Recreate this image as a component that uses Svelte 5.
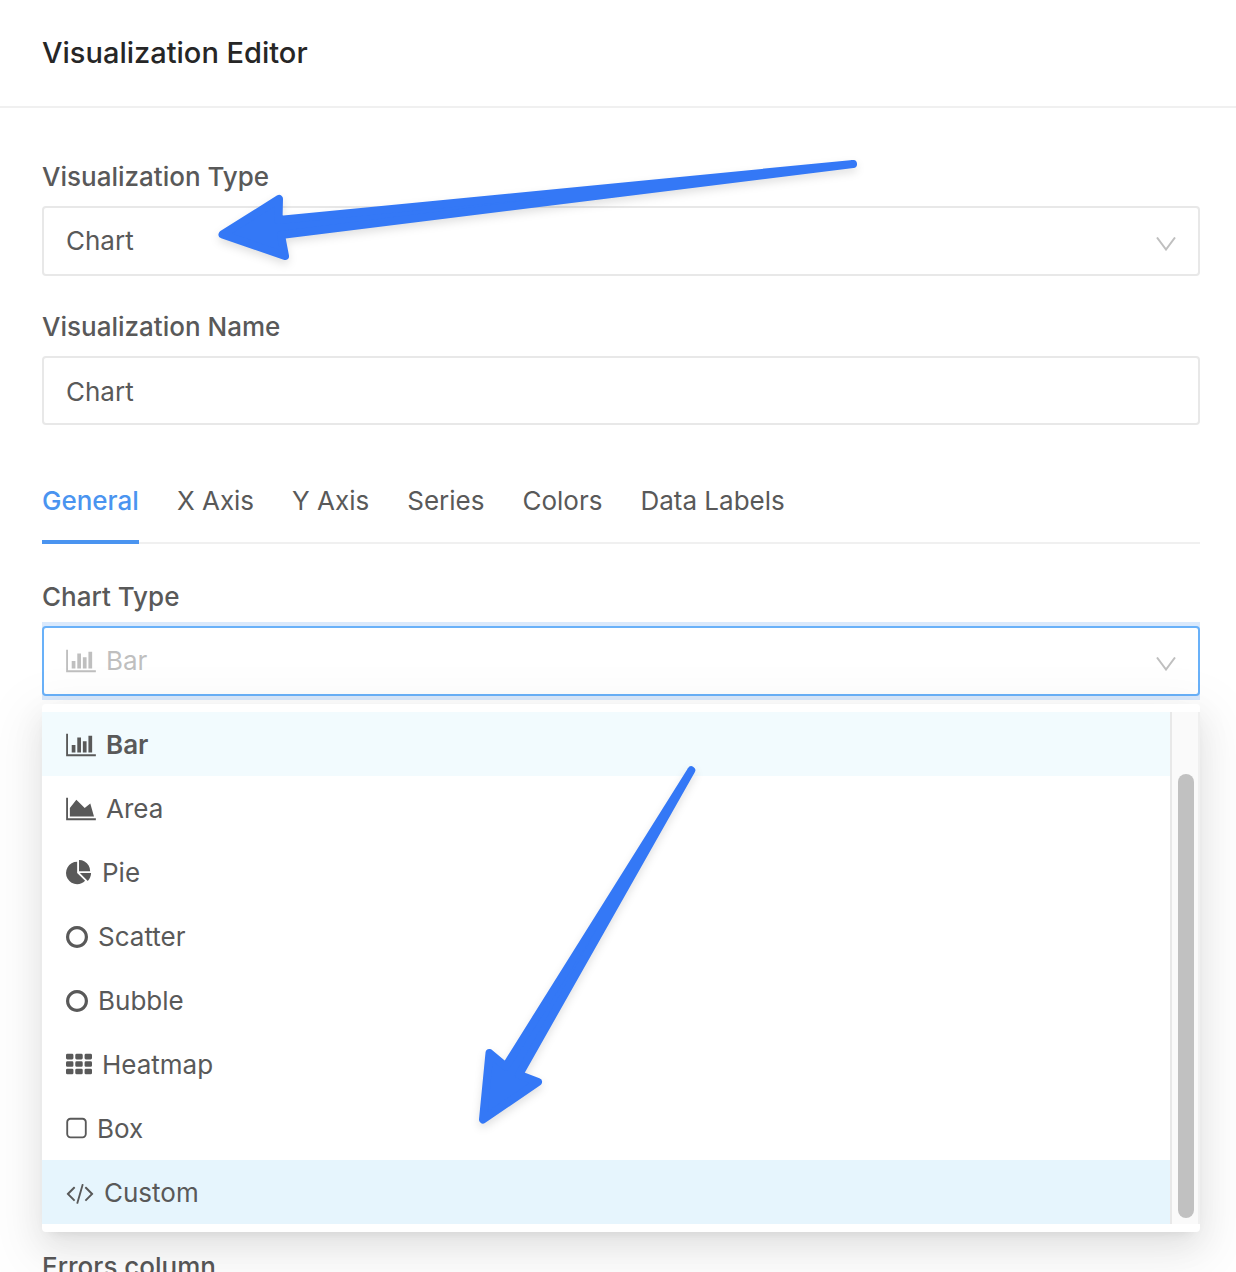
<script lang="ts">
    interface ChartType {
        id: string;
        label: string;
        width: number;
        viewBox: string;
        path: string;
    }

    const circlePath =
        "M896 352q-148 0-273 73t-198 198-73 273 73 273 198 198 273 73 273-73 198-198 73-273-73-273-198-198-273-73zm768 544q0 209-103 385.5t-279.500 279.500-385.500 103-385.500-103-279.500-279.500-103-385.500 103-385.500 279.500-279.500 385.500-103 385.500 103 279.500 279.500 103 385.500z";

    const cell = "h320q96 0 96 96v192q0 96-96 96h-320q-96 0-96-96v-192q0-96 96-96z";
    const gridPath = [128, 640, 1152]
        .flatMap((y) => [96, 736, 1376].map((x) => `M${x} ${y}${cell}`))
        .join("");

    const chartTypes: ChartType[] = [
        {
            id: "bar",
            label: "Bar",
            width: 30,
            viewBox: "0 0 2048 1792",
            path: "M640 896v512h-256v-512h256zm384-512v1024h-256v-1024h256zm1024 1152v128h-2048v-1536h128v1408h1920zm-640-896v768h-256v-768h256zm384-384v1152h-256v-1152h256z",
        },
        {
            id: "area",
            label: "Area",
            width: 30,
            viewBox: "0 0 2048 1792",
            path: "M2048 1536v128h-2048v-1536h128v1408h1920zm-384-1024l256 896h-1664v-576l448-576 576 576z",
        },
        {
            id: "pie",
            label: "Pie",
            width: 26,
            viewBox: "0 0 1792 1792",
            path: "M768 890l546 546q-106 108-247.500 168t-298.500 60q-209 0-385.500-103t-279.500-279.500-103-385.500 103-385.500 279.500-279.500 385.500-103v762zm187 6h773q0 157-60 298.500t-168 247.500zm709-128h-768v-768q209 0 385.500 103t279.500 279.500 103 385.500z",
        },
        { id: "scatter", label: "Scatter", width: 22, viewBox: "128 0 1536 1792", path: circlePath },
        { id: "bubble", label: "Bubble", width: 22, viewBox: "128 0 1536 1792", path: circlePath },
        { id: "heatmap", label: "Heatmap", width: 26, viewBox: "0 0 1792 1792", path: gridPath },
        {
            id: "box",
            label: "Box",
            width: 21,
            viewBox: "0 0 1408 1792",
            path: "M1120 256h-832q-66 0-113 47t-47 113v832q0 66 47 113t113 47h832q66 0 113-47t47-113v-832q0-66-47-113t-113-47zm288 160v832q0 119-84.500 203.500t-203.500 84.500h-832q-119 0-203.500-84.500t-84.500-203.500v-832q0-119 84.500-203.500t203.500-84.500h832q119 0 203.500 84.500t84.500 203.500z",
        },
        {
            id: "custom",
            label: "Custom",
            width: 28,
            viewBox: "0 0 1920 1792",
            path: "M617 1399l-50 50q-10 10-23 10t-23-10l-466-466q-10-10-10-23t10-23l466-466q10-10 23-10t23 10l50 50q10 10 10 23t-10 23l-393 393 393 393q10 10 10 23t-10 23zm591-1067l-373 1291q-4 13-15.500 19.500t-23.500 2.500l-62-17q-13-4-19.500-15.500t-2.500-24.500l373-1291q4-13 15.500-19.500t23.500-2.500l62 17q13 4 19.500 15.500t2.500 24.500zm657 651l-466 466q-10 10-23 10t-23-10l-50-50q-10-10-10-23t10-23l393-393-393-393q-10-10-10-23t10-23l50-50q10-10 23-10t23 10l466 466q10 10 10 23t-10 23z",
        },
    ];

    const tabs = ["General", "X Axis", "Y Axis", "Series", "Colors", "Data Labels"];

    let activeTab = $state("General");
    let visualizationName = $state("Chart");
    let chartType = $state("bar");
    let highlighted = $state("custom");

    let selected = $derived(chartTypes.find((t) => t.id === chartType) ?? chartTypes[0]);
</script>

{#snippet icon(type: ChartType)}
    <svg class="icon" width={type.width} height="26" viewBox={type.viewBox} aria-hidden="true">
        <path d={type.path} />
    </svg>
{/snippet}

{#snippet chevron()}
    <svg class="chevron" width="20" height="14" viewBox="0 0 20 14" aria-hidden="true">
        <path d="M1 0.500L10 12.500L19 0.500" />
    </svg>
{/snippet}

<div class="editor">
    <header>
        <h1>Visualization Editor</h1>
    </header>

    <main>
        <div class="field">
            <label for="visualization-type">Visualization Type</label>
            <div class="control">
                <select id="visualization-type">
                    <option>Chart</option>
                </select>
                {@render chevron()}
            </div>
        </div>

        <div class="field">
            <label for="visualization-name">Visualization Name</label>
            <div class="control name">
                <input id="visualization-name" type="text" bind:value={visualizationName} />
            </div>
        </div>

        <div class="tabs" role="tablist">
            {#each tabs as tab}
                <button
                    role="tab"
                    class:active={activeTab === tab}
                    aria-selected={activeTab === tab}
                    onclick={() => (activeTab = tab)}
                >
                    {tab}
                </button>
            {/each}
        </div>

        <div class="field chart-type">
            <label for="chart-type">Chart Type</label>
            <div class="focus-ring">
                <div class="control open">
                    {@render icon(selected)}
                    <select id="chart-type" bind:value={chartType}>
                        {#each chartTypes as type}
                            <option value={type.id}>{type.label}</option>
                        {/each}
                    </select>
                    {@render chevron()}
                </div>
            </div>
            <div class="menu">
                <div class="options" role="listbox" aria-label="Chart Type">
                    {#each chartTypes as type}
                        <button
                            class="option"
                            class:selected={chartType === type.id}
                            class:highlighted={highlighted === type.id}
                            role="option"
                            aria-selected={chartType === type.id}
                            onmouseenter={() => (highlighted = type.id)}
                            onclick={() => (chartType = type.id)}
                        >
                            {@render icon(type)}
                            <span>{type.label}</span>
                        </button>
                    {/each}
                </div>
                <div class="track">
                    <div class="thumb"></div>
                </div>
            </div>
        </div>

        <div class="field-label">Errors column</div>
    </main>

    <svg class="arrows" width="900" height="1140" viewBox="0 0 900 1140" aria-hidden="true">
        <path d="M222.500 234.500L279 199L278.500 220L853 164L281 235L285 256Z" />
        <path d="M483 1119.500L489.500 1053L505.700 1066.500L691.300 770.300L519 1074.700L538 1082Z" />
    </svg>
</div>

<style>
    :global(body) {
        margin: 0;
        background: #fff;
    }

    .editor {
        position: relative;
        height: 100vh;
        overflow: hidden;
        color: #595959;
        font-family: Inter, "Liberation Sans", sans-serif;
        font-size: 26px;
        line-height: 40px;
    }

    header {
        padding: 32px 42px;
        border-bottom: 2px solid #f0f0f0;
    }

    h1 {
        margin: 0;
        color: #262626;
        font-size: 29px;
        line-height: 42px;
        font-weight: 500;
    }

    main {
        padding: 49px 36px 0 42px;
    }

    .field {
        margin-bottom: 31px;
    }

    label,
    .field-label {
        display: block;
        padding-bottom: 9px;
        font-weight: 500;
    }

    .control {
        position: relative;
        display: flex;
        align-items: center;
        box-sizing: border-box;
        height: 70px;
        padding-left: 22px;
        border: 2px solid #e8e8e8;
        border-radius: 4px;
        background: #fff;
    }

    .control.name {
        height: 69px;
        padding-top: 2px;
    }

    select,
    input {
        flex: 1;
        align-self: stretch;
        min-width: 0;
        padding: 0;
        border: none;
        outline: none;
        background: transparent;
        color: inherit;
        font: inherit;
        appearance: none;
    }

    .chevron {
        position: absolute;
        right: 22px;
        top: 29px;
        fill: none;
        stroke: #bfbfbf;
        stroke-width: 2;
        pointer-events: none;
    }

    .icon {
        flex: none;
        margin-right: 10px;
        fill: currentColor;
    }

    .tabs {
        display: flex;
        gap: 38px;
        margin-bottom: 33px;
        padding-top: 9px;
        border-bottom: 2px solid #f0f0f0;
    }

    .tabs button {
        margin-bottom: -2px;
        padding: 16px 0 19px;
        border: none;
        border-bottom: 4px solid transparent;
        background: none;
        color: inherit;
        font: inherit;
        cursor: pointer;
    }

    .tabs button.active {
        border-bottom-color: #4a94f0;
        color: #4a94f0;
        font-weight: 500;
    }

    .chart-type {
        margin-bottom: 0;
    }

    .focus-ring {
        position: relative;
        margin: -4px 0;
        padding: 4px 0;
        background: #dae9fc;
    }

    .control.open {
        border-color: #69b1f9;
        color: #bfbfbf;
    }

    .menu {
        position: relative;
        display: flex;
        margin: 8px 0 15px;
        padding: 8px 0;
        border-radius: 4px;
        background: #fff;
        box-shadow:
            0 6px 12px -8px rgba(0, 0, 0, 0.12),
            0 12px 32px rgba(0, 0, 0, 0.08),
            0 18px 56px 16px rgba(0, 0, 0, 0.05);
    }

    .options {
        flex: 1;
    }

    .option {
        display: flex;
        align-items: center;
        width: 100%;
        padding: 13px 24px 11px;
        border: none;
        background: none;
        color: inherit;
        font: inherit;
        text-align: left;
        cursor: pointer;
    }

    .option.selected {
        background: #f2fbfe;
        font-weight: 600;
    }

    .option.highlighted {
        background: #e6f5fd;
    }

    .track {
        box-sizing: border-box;
        width: 30px;
        padding: 62px 4px 6px 6px;
        border-left: 2px solid #e8e8e8;
        border-right: 2px solid #f0f0f0;
        background: #fafafa;
    }

    .thumb {
        width: 16px;
        height: 100%;
        border-radius: 8px;
        background: #c1c1c1;
    }

    .arrows {
        position: absolute;
        top: 0;
        left: 0;
        fill: #3478f6;
        stroke: #3478f6;
        stroke-width: 8;
        stroke-linejoin: round;
        filter: drop-shadow(0 4px 4px rgba(0, 0, 0, 0.12));
        pointer-events: none;
    }
</style>
